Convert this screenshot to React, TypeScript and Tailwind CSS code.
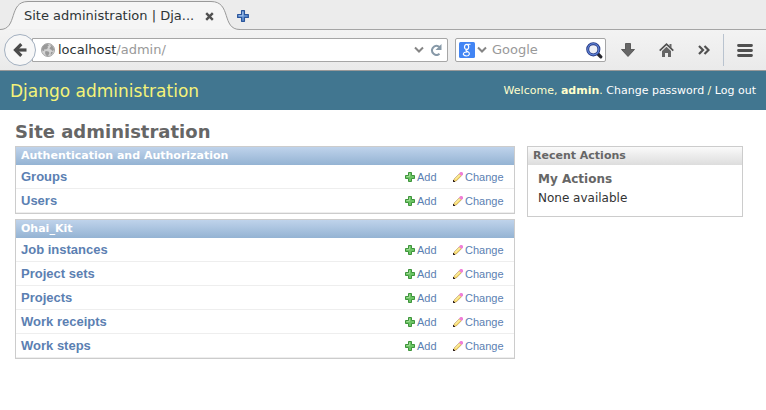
import React from "react";

const modules = [
  { name: "Authentication and Authorization", models: ["Groups", "Users"] },
  {
    name: "Ohai_Kit",
    models: ["Job instances", "Project sets", "Projects", "Work receipts", "Work steps"],
  },
];

function PlusIcon() {
  return (
    <svg width="10" height="10" viewBox="0 0 10 10" className="shrink-0" aria-hidden="true">
      <path d="M3.500.5h3v3h3v3h-3v3h-3v-3h-3v-3h3z" fill="#6cc464" stroke="#3f943c" />
      <path d="M4.500 1.500v3h-3" fill="none" stroke="#9ddb92" />
    </svg>
  );
}

function PencilIcon() {
  return (
    <svg width="10" height="10" viewBox="0 0 10 10" className="shrink-0" aria-hidden="true">
      <path d="M.5 9.500L1.200 7 6.500 1.700l2 2L3.200 9z" fill="#fbdf6c" stroke="#b3925a" strokeWidth=".7" />
      <path d="M2.200 7.300L6.800 2.700" stroke="#fff6c4" strokeWidth="1" />
      <path d="M6 1.500L7.500 0H9l1 1v1.500L8.500 4z" fill="#f07fd8" />
      <path d="M0 8h1v1h1v1H0z" fill="#33231f" />
    </svg>
  );
}

function NewTabIcon() {
  return (
    <svg width="12" height="12" viewBox="0 0 12 12" aria-hidden="true">
      <path d="M4.600.7h2.800v3.900h3.900v2.800H7.400v3.900H4.600V7.400H.7V4.600h3.900z" fill="#6d9bd8" stroke="#2a559c" strokeWidth="1.300" strokeLinejoin="round" />
      <path d="M5.800 1.500v4.300H1.500" fill="none" stroke="#a5c4ec" />
    </svg>
  );
}

function BackIcon() {
  return (
    <svg width="14" height="14" viewBox="0 0 14 14" fill="none" stroke="#4b4b4b" aria-hidden="true">
      <path d="M2 7H13.500" strokeWidth="3.200" />
      <path d="M8.300 1.200L2.500 7l5.800 5.800" strokeWidth="3.200" />
    </svg>
  );
}

function GlobeIcon() {
  return (
    <svg width="14" height="14" viewBox="0 0 14 14" className="shrink-0" aria-hidden="true">
      <circle cx="7" cy="7" r="6.500" fill="#d3d3d3" stroke="#a6a6a6" />
      <path d="M1 5C2 2.500 4 1 6.500 1L8 2.200 6.500 3.500 7 5 5 6.500 3.500 6 3 8 1.200 7.500zM9 1.500c2.500 1 4 3 4 5.500l-1.500 1L10 6.500 8.500 6 9 4.500 10 3.500zM4.500 8l3 .5 1 1.500L7 13 5 12.500 4 10zM10 9l2-.3-1 2.300-1.500.8z" fill="#999" />
    </svg>
  );
}

function ChevronIcon() {
  return (
    <svg width="10" height="8" viewBox="0 0 10 8" fill="none" className="shrink-0" aria-hidden="true">
      <path d="M1 1.500l4 4 4-4" stroke="#858585" strokeWidth="2" />
    </svg>
  );
}

function ReloadIcon() {
  return (
    <svg width="12" height="12" viewBox="0 0 12 12" fill="none" aria-hidden="true">
      <path d="M9.500 9.800A4.500 4.500 0 1 1 8.500 2.300L10 3.500" stroke="#8799a8" strokeWidth="2" />
      <path d="M11.500 0v6h-6z" fill="#8799a8" />
    </svg>
  );
}

function GoogleIcon() {
  return (
    <svg width="16" height="16" viewBox="0 0 16 16" fill="none" className="shrink-0" aria-hidden="true">
      <rect width="16" height="16" rx="1.500" fill="#4285f4" />
      <ellipse cx="7.600" cy="4.900" rx="2.100" ry="2.500" stroke="#fff" strokeWidth="1.200" />
      <path d="M8.500 2.300h3" stroke="#fff" strokeWidth="1" />
      <path d="M7.500 7.500c-1.300 1.200 0 1.600 1.500 2.300 2.400 1.200 1.500 4.200-1.500 4.200-2.800 0-3.800-1.700-2.800-3 .8-1 2.300-1.100 3.800-1.200" stroke="#fff" strokeWidth="1.200" />
    </svg>
  );
}

function SearchIcon() {
  return (
    <svg width="17" height="17" viewBox="0 0 17 17" fill="none" aria-hidden="true">
      <path d="M12 12l2.800 2.800" stroke="#26262c" strokeWidth="3.200" strokeLinecap="round" />
      <circle cx="7.300" cy="7.300" r="5.600" fill="#eef0f6" stroke="#263983" strokeWidth="3" />
      <circle cx="7.300" cy="7.300" r="5.600" stroke="#5f83d6" strokeWidth="1.200" />
    </svg>
  );
}

function DownloadIcon() {
  return (
    <svg width="14" height="14" viewBox="0 0 14 14" aria-hidden="true">
      <path d="M4.500.5h5v6h4L7 13.500.5 6.500h4z" fill="#666" stroke="#484848" strokeWidth=".8" />
    </svg>
  );
}

function HomeIcon() {
  return (
    <svg width="15" height="14" viewBox="0 0 15 14" aria-hidden="true">
      <path d="M.7 7.700L7.500 1.200l6.800 6.500" fill="none" stroke="#505050" strokeWidth="1.700" />
      <path d="M10.500 1h2v4l-2-1.800zM3 8l4.500-4.200L12 8v6H9v-4H6v4H3z" fill="#666" />
    </svg>
  );
}

function OverflowIcon() {
  return (
    <svg width="12" height="10" viewBox="0 0 12 10" fill="none" aria-hidden="true">
      <path d="M1 1l4 4-4 4M6.500 1l4 4-4 4" stroke="#505050" strokeWidth="2.200" />
    </svg>
  );
}

function MenuIcon() {
  return (
    <svg width="16" height="13" viewBox="0 0 16 13" aria-hidden="true">
      <path d="M1.500 1.500h13M1.500 6.500h13M1.500 11.500h13" stroke="#505050" strokeWidth="2.800" strokeLinecap="round" />
    </svg>
  );
}

function BrowserChrome() {
  return (
    <div className="border-b border-[#999999] bg-[#ececec] text-[13px] text-[#2e3436]">
      <div className="relative flex h-[30px] items-center pt-0.5">
        <svg className="absolute left-0 top-0 h-[30px] w-full" aria-hidden="true">
          <path d="M0 29.500C18 29.500 8 1.500 28 1.500H211C232 1.500 221 29.500 240 29.500" fill="#f5f5f5" stroke="#999" />
          <path d="M240 29.500H4000" stroke="#a5a5a5" />
        </svg>
        <div className="relative flex w-[220px] items-center justify-between pl-6 pr-0.5">
          <span>Site administration | Dja...</span>
          <button aria-label="Close tab" className="p-1">
            <svg width="9" height="9" viewBox="0 0 9 9" aria-hidden="true">
              <path d="M1.200 1.200l6.600 6.600M7.800 1.200L1.200 7.800" stroke="#505050" strokeWidth="2.400" />
            </svg>
          </button>
        </div>
        <button aria-label="New tab" className="relative ml-[17px]"><NewTabIcon /></button>
      </div>
      <div className="flex h-10 items-center bg-linear-to-b from-[#f3f3f3] to-[#eaeaea] pl-1 pr-[13px]">
        <button aria-label="Back" className="relative z-10 flex size-8 shrink-0 items-center justify-center rounded-full border border-[#a3b0c0] bg-[#f7f7f7]">
          <BackIcon />
        </button>
        <div className="-ml-1 flex h-6 min-w-0 flex-1 items-center rounded-r-xs border border-[#a6a6a6] bg-white pl-2 pr-[5px]">
          <GlobeIcon />
          <div className="ml-[3px] flex-1 whitespace-nowrap" role="textbox" aria-label="Address" tabIndex={0}>
            localhost<span className="text-[#999]">/admin/</span>
          </div>
          <button aria-label="Show history"><ChevronIcon /></button>
          <button aria-label="Reload" className="ml-1.5"><ReloadIcon /></button>
        </div>
        <div className="ml-[7px] flex h-6 w-[151px] shrink-0 items-center rounded-xs border border-[#a6a6a6] bg-white pl-[3px] pr-0.5">
          <button aria-label="Choose search engine" className="flex items-center gap-0.5"><GoogleIcon /><ChevronIcon /></button>
          <input aria-label="Search" placeholder="Google" className="ml-[5px] min-w-0 flex-1 bg-transparent outline-none placeholder:text-[#999]" />
          <button aria-label="Submit search"><SearchIcon /></button>
        </div>
        <button aria-label="Downloads" className="ml-[15px]"><DownloadIcon /></button>
        <button aria-label="Home" className="ml-6"><HomeIcon /></button>
        <button aria-label="More tools" className="ml-6"><OverflowIcon /></button>
        <div className="ml-[13px] h-8 w-px bg-[#b9c3cf]" />
        <button aria-label="Open menu" className="ml-[13px]"><MenuIcon /></button>
      </div>
    </div>
  );
}

function ModelTable({ name, models }: { name: string; models: string[] }) {
  return (
    <section className="border border-[#cccccc]">
      <table className="w-full border-separate border-spacing-0">
        <caption className="h-[18px] bg-linear-to-b from-[#bfd3eb] to-[#94b3d3] px-[5px] text-left text-[11px] leading-[18px] font-bold text-white">
          {name}
        </caption>
        <tbody className="font-['Liberation_Sans',Arial,sans-serif] text-[#5b80b2]">
          {models.map((model) => (
            <tr key={model} className="h-6">
              <th scope="row" className="border-b border-[#eeeeee] pl-[5px] text-left text-[13px] leading-4 font-bold">
                <a href="#">{model}</a>
              </th>
              <td className="w-12 border-b border-[#eeeeee] pt-px text-[11px] leading-4">
                <a href="#" className="flex items-center gap-0.5"><PlusIcon />Add</a>
              </td>
              <td className="w-[61px] border-b border-[#eeeeee] pt-px text-[11px] leading-4">
                <a href="#" className="flex items-center gap-0.5"><PencilIcon />Change</a>
              </td>
            </tr>
          ))}
        </tbody>
      </table>
    </section>
  );
}

export default function App() {
  return (
    <div className="min-h-screen bg-white font-['DejaVu_Sans',Verdana,sans-serif]">
      <BrowserChrome />
      <header className="flex h-[39px] items-center justify-between bg-[#417690] px-[10px]">
        <div className="text-[17px] leading-6 text-[#f4f379]">Django administration</div>
        <div className="text-[11px] leading-4 text-[#ffffcc]">
          Welcome, <strong>admin</strong>. <a href="#" className="text-white">Change password</a> /{" "}
          <a href="#" className="text-white">Log out</a>
        </div>
      </header>
      <main className="pl-[15px] pr-[23px] pt-[10px]">
        <h1 className="text-[18px] leading-6 font-bold text-[#666666]">Site administration</h1>
        <div className="mt-0.5 flex items-start gap-3">
          <div className="flex min-w-0 flex-1 flex-col gap-[5px]">
            {modules.map((m) => <ModelTable key={m.name} {...m} />)}
          </div>
          <aside className="w-[216px] shrink-0 border border-[#cccccc] pb-[9px]">
            <h2 className="h-[18px] bg-linear-to-b from-[#fafafa] to-[#dddddd] px-[5px] text-[11px] leading-[18px] font-bold text-[#666666]">
              Recent Actions
            </h2>
            <div className="px-[10px] pt-1">
              <h3 className="text-[12px] leading-5 font-bold text-[#666666]">My Actions</h3>
              <p className="text-[12px] leading-[18px] text-[#333333]">None available</p>
            </div>
          </aside>
        </div>
      </main>
    </div>
  );
}
